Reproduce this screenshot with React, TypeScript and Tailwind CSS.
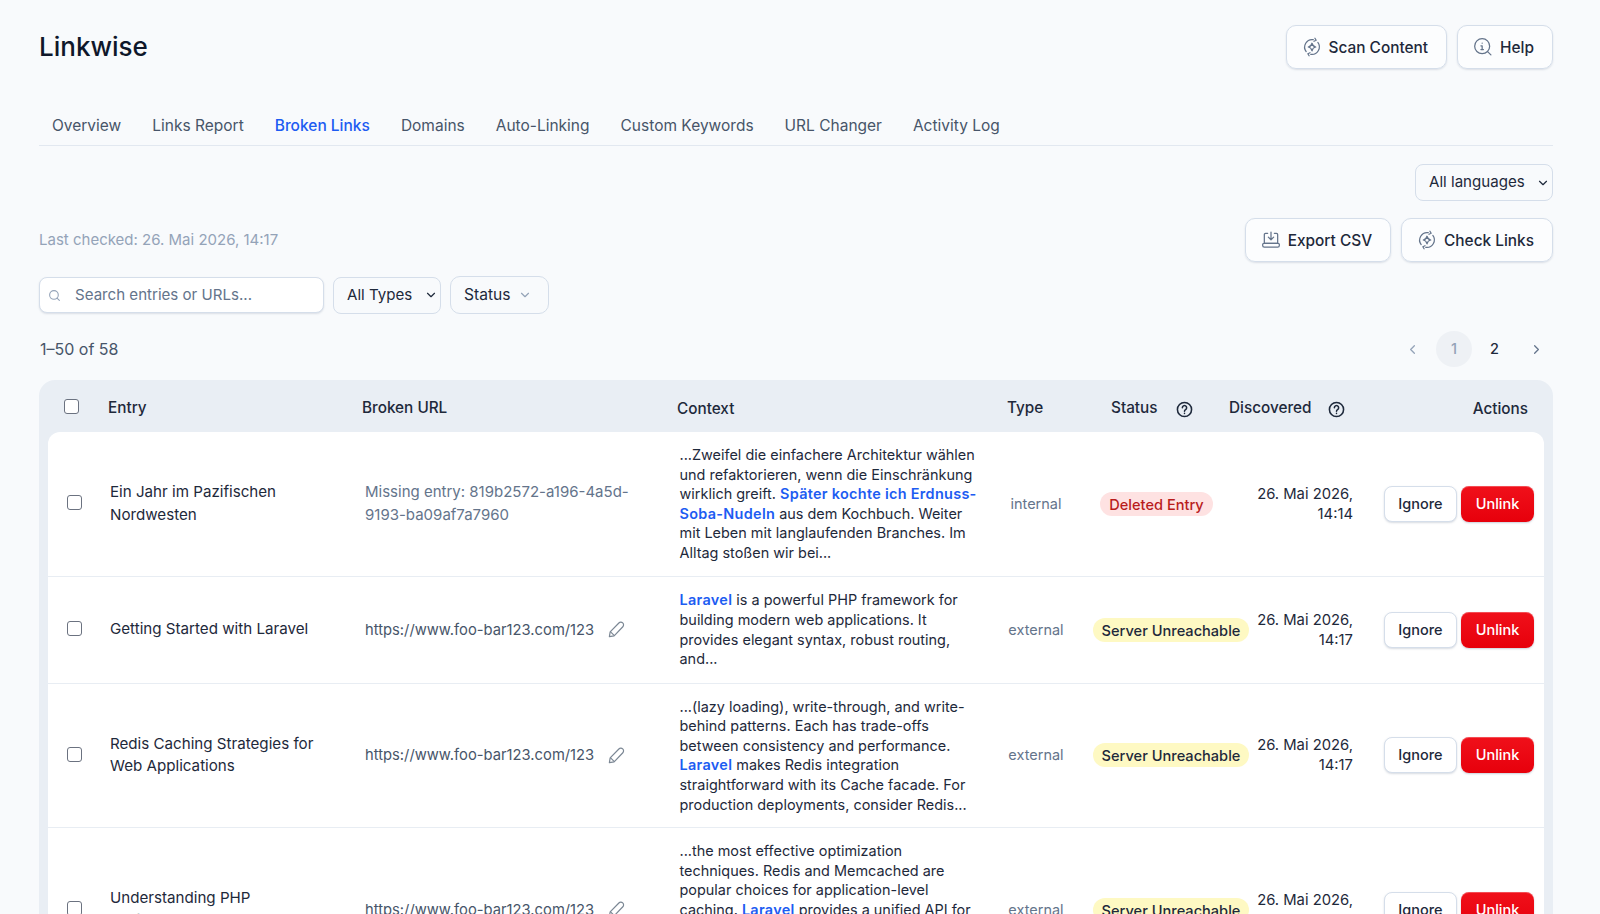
import { ChevronDown, ChevronLeft, ChevronRight, Search } from 'lucide-react';
import type { ReactNode } from 'react';

const ScanIcon = () => (
  <svg viewBox="0 0 24 24" className="h-5 w-5 text-[#64748b]" fill="none" stroke="currentColor" strokeWidth="1.5" strokeLinecap="round" strokeLinejoin="round">
    <path d="M5 17.500A9 9 0 0 1 13.500 3.200" />
    <path d="M19 6.500A9 9 0 0 1 10.500 20.800" />
    <path d="M15.500 1.500l1.500 2.400-2.600 1.200" />
    <path d="M8.500 22.500L7 20.100l2.600-1.200" />
    <path d="M12 7.500c.6 2.700 1.800 3.900 4.500 4.500-2.700.6-3.900 1.800-4.500 4.500-.6-2.700-1.800-3.900-4.500-4.500 2.700-.6 3.900-1.800 4.500-4.500z" />
  </svg>
);

const HelpIcon = () => (
  <svg viewBox="0 0 24 24" className="h-5 w-5 text-[#64748b]" fill="none" stroke="currentColor" strokeWidth="1.5" strokeLinecap="round" strokeLinejoin="round">
    <circle cx="11" cy="11" r="9" />
    <path d="M17.500 17.500L21.500 21.500" />
    <path d="M9.500 10.500H11V15M9.500 15H12.500" />
    <path d="M11 7.200v.2" />
  </svg>
);

const ExportIcon = () => (
  <svg viewBox="0 0 24 24" className="h-5 w-5 text-[#64748b]" fill="none" stroke="currentColor" strokeWidth="1.5" strokeLinecap="round" strokeLinejoin="round">
    <path d="M8 4H5.500A1.500 1.500 0 0 0 4 5.500V16h16V5.500A1.500 1.500 0 0 0 18.500 4H16" />
    <path d="M2 17.500A1.500 1.500 0 0 1 3.500 16h17a1.500 1.500 0 0 1 1.500 1.500v1A2 2 0 0 1 20 20.500H4a2 2 0 0 1-2-2z" />
    <path d="M12 2.500v9M8.800 8.500l3.200 3.200 3.200-3.200" />
  </svg>
);

const PencilIcon = () => (
  <svg viewBox="0 0 24 24" className="h-[19px] w-[19px] text-[#7b8794]" fill="none" stroke="currentColor" strokeWidth="1.5" strokeLinecap="round" strokeLinejoin="round">
    <path d="M15 3.800a3.400 3.400 0 0 1 5 4.700L9 20l-6 1 1-6z" />
    <path d="M4.500 15l4.500 4.500" />
  </svg>
);

const QuestionIcon = () => (
  <svg viewBox="0 0 24 24" className="mt-[3px] h-[17px] w-[17px] text-[#1e293b]" fill="none" stroke="currentColor" strokeWidth="2.200" strokeLinecap="round" strokeLinejoin="round">
    <circle cx="12" cy="12" r="10" />
    <path d="M9 9.500a3 3 0 1 1 4.500 2.600c-1 .6-1.500 1.200-1.500 2.400" />
    <path d="M12 17.500v.1" />
  </svg>
);

const OutlineButton = ({ icon, children }: { icon: ReactNode; children: ReactNode }) => (
  <button className="flex h-[44px] items-center gap-[7px] rounded-[10px] border border-[#d5deea] bg-white/60 pl-[15px] pr-[18px] text-[15.400px] font-medium text-[#1e293b] shadow-[0_1px_2px_rgba(100,116,139,0.2)]">
    {icon}
    <span className="pt-px">{children}</span>
  </button>
);

const Checkbox = () => (
  <span className="block h-[15px] w-[15px] rounded-[3px] border border-[#6b7280] bg-white" />
);

const Blue = ({ children }: { children: ReactNode }) => (
  <span className="font-semibold tracking-[0.3px] text-[#1d5cf2]">{children}</span>
);

const tabs = ['Overview', 'Links Report', 'Broken Links', 'Domains', 'Auto-Linking', 'Custom Keywords', 'URL Changer', 'Activity Log'];

type Row = {
  entry: string;
  url: string;
  missing?: boolean;
  context: ReactNode;
  type: string;
  status: string;
  date: string;
};

const rows: Row[] = [
  {
    entry: 'Ein Jahr im Pazifischen Nordwesten',
    url: 'Missing entry: 819b2572-a196-4a5d-9193-ba09af7a7960',
    missing: true,
    context: (
      <>
        ...Zweifel die einfachere Architektur wählen und refaktorieren, wenn die Einschränkung wirklich greift. <Blue>Später kochte ich Erdnuss-Soba-Nudeln</Blue> aus dem Kochbuch. Weiter mit Leben mit langlaufenden Branches. Im Alltag stoßen wir bei...
      </>
    ),
    type: 'internal',
    status: 'Deleted Entry',
    date: '14:14',
  },
  {
    entry: 'Getting Started with Laravel',
    url: 'https://www.foo-bar123.com/123',
    context: (
      <>
        <Blue>Laravel</Blue> is a powerful PHP framework for building modern web applications. It provides elegant syntax, robust routing, and...
      </>
    ),
    type: 'external',
    status: 'Server Unreachable',
    date: '14:17',
  },
  {
    entry: 'Redis Caching Strategies for Web Applications',
    url: 'https://www.foo-bar123.com/123',
    context: (
      <>
        ...(lazy loading), write-through, and write-behind patterns. Each has trade-offs between consistency and performance. <Blue>Laravel</Blue> makes Redis integration straightforward with its Cache facade. For production deployments, consider Redis...
      </>
    ),
    type: 'external',
    status: 'Server Unreachable',
    date: '14:17',
  },
  {
    entry: 'Understanding PHP Performance Optimization',
    url: 'https://www.foo-bar123.com/123',
    context: (
      <>
        ...the most effective optimization techniques. Redis and Memcached are popular choices for application-level caching. <Blue>Laravel</Blue> provides a unified API for multiple cache backends, making it easy to switch between drivers without changing your application code. Combined with...
      </>
    ),
    type: 'external',
    status: 'Server Unreachable',
    date: '14:17',
  },
];

export default function App() {
  return (
    <div className="h-screen overflow-hidden bg-[#f8fafc] pl-[39px] pr-[47px] font-['Inter',sans-serif] text-[#1e293b]">
      <div className="flex items-center justify-between pt-[25px]">
        <h1 className="text-[26px] font-medium leading-[44px] text-[#0f172a]">Linkwise</h1>
        <div className="flex gap-[10px]">
          <OutlineButton icon={<ScanIcon />}>Scan Content</OutlineButton>
          <OutlineButton icon={<HelpIcon />}>Help</OutlineButton>
        </div>
      </div>

      <div className="mt-[34px] flex h-[43px] gap-[5px] border-b border-[#e2e8f0]">
        {tabs.map((t) => (
          <span key={t} className={`px-[13px] pt-[3px] text-[15.500px] leading-[40px] ${t === 'Broken Links' ? 'font-medium text-[#1d5cf2]' : 'text-[#475569]'}`}>
            {t}
          </span>
        ))}
      </div>

      <div className="mt-[18px] flex justify-end">
        <div className="flex h-[37px] w-[138px] items-center justify-between rounded-[8px] border border-[#d5deea] pl-[13px] pr-[2px] text-[15.100px]">
          All languages
          <ChevronDown className="h-[14px] w-[14px]" />
        </div>
      </div>

      <div className="mt-[17px] flex items-center justify-between">
        <span className="pt-px text-[15px] text-[#94a3b8]">Last checked: 26. Mai 2026, 14:17</span>
        <div className="flex gap-[10px]">
          <OutlineButton icon={<ExportIcon />}>Export CSV</OutlineButton>
          <OutlineButton icon={<ScanIcon />}>Check Links</OutlineButton>
        </div>
      </div>

      <div className="mt-[14px] flex items-center gap-[9px]">
        <div className="flex h-[36px] w-[285px] items-center gap-[14px] rounded-[8px] border border-[#d5deea] bg-white pl-[8px] text-[15.100px] text-[#64748b] shadow-[0_1px_2px_rgba(100,116,139,0.2)]">
          <Search className="h-[13px] w-[13px] text-[#94a3b8]" />
          Search entries or URLs...
        </div>
        <div className="flex h-[37px] w-[108px] items-center justify-between rounded-[8px] border border-[#d5deea] pl-[13px] pr-[2px] text-[15.100px]">
          All Types
          <ChevronDown className="h-[14px] w-[14px]" />
        </div>
        <div className="flex h-[38px] w-[99px] items-center justify-between rounded-[10px] border border-[#d5deea] pl-[13px] pr-[16px] text-[15.600px]">
          Status
          <ChevronDown className="h-[14px] w-[14px] text-[#94a3b8]" />
        </div>
      </div>

      <div className="mt-[17px] flex h-[36px] items-center justify-between">
        <span className="pl-px text-[16px] text-[#475569]">1–50 of 58</span>
        <div className="flex items-center text-[14.500px] font-medium">
          <ChevronLeft className="h-[15px] w-[15px] text-[#94a3b8]" />
          <span className="ml-[16px] flex h-[36px] w-[36px] items-center justify-center rounded-full bg-[#eef1f5] text-[#94a3b8]">1</span>
          <span className="flex h-[36px] w-[45px] items-center justify-center">2</span>
          <ChevronRight className="ml-[12px] mr-[9px] h-[15px] w-[15px] text-[#64748b]" />
        </div>
      </div>

      <div className="mt-[13px] rounded-t-[16px] bg-[#e9eef4] px-[9px]">
        <div className="grid h-[52px] grid-cols-[60px_254px_315px_330px_104px_118px_1fr] items-center pt-[4px] text-[15.300px] font-medium">
          <span className="-mt-[3px] pl-[16px]"><Checkbox /></span>
          <span>Entry</span>
          <span>Broken URL</span>
          <span className="pt-[2px]">Context</span>
          <span>Type</span>
          <span className="flex items-center gap-[18px] whitespace-nowrap">Status <QuestionIcon /></span>
          <span className="flex items-center justify-between">
            <span className="flex items-center gap-[17px] whitespace-nowrap">Discovered <QuestionIcon /></span>
            <span className="pr-[16px] pt-[2px]">Actions</span>
          </span>
        </div>
        <div className="rounded-t-[12px] bg-white">
          {rows.map((r) => (
            <div key={r.entry} className="grid min-h-[107px] grid-cols-[62px_255px_314.500px_305.500px_102px_168px_98px_1fr] items-center border-b border-[#e8edf3] py-[13px] text-[15.150px]">
              <span className="-mt-[2px] pl-[19px]"><Checkbox /></span>
              <span className="pr-[20px] leading-[22.500px]">{r.entry}</span>
              {r.missing ? (
                <span className="pr-[30px] text-[15px] leading-[22.500px] text-[#64748b]">{r.url}</span>
              ) : (
                <span className="flex items-center gap-[13px] text-[14.750px] text-[#475569]">{r.url} <PencilIcon /></span>
              )}
              <span className="pr-[4px] text-[14.450px] leading-[19.600px]">{r.context}</span>
              <span className="text-center text-[14.500px] text-[#64748b]">{r.type}</span>
              <span className="flex justify-center">
                <span className={`whitespace-nowrap rounded-full px-[9px] pb-[1px] pt-[3px] text-[14.600px] font-medium leading-[20px] ${r.status === 'Deleted Entry' ? 'mr-[29px] bg-[#fee2e2] text-[#b91c1c]' : 'bg-[#fef9c3] text-[#1e293b]'}`}>
                  {r.status}
                </span>
              </span>
              <span className="whitespace-nowrap text-right text-[14.800px] leading-[20px]">26. Mai 2026,<br />{r.date}</span>
              <span className="flex justify-end gap-[4px] pr-[10px]">
                <button className="h-[36px] w-[73px] rounded-[8px] border border-[#d5deea] bg-white text-[14.500px] font-medium shadow-[0_1px_2px_rgba(100,116,139,0.25)]">Ignore</button>
                <button className="h-[36px] w-[73px] rounded-[8px] bg-linear-to-b from-[#f0101a] to-[#e7000b] text-[14.500px] font-medium text-white shadow-[inset_0_1px_0_rgba(255,255,255,0.25),0_1px_2px_rgba(100,116,139,0.35)]">Unlink</button>
              </span>
            </div>
          ))}
        </div>
      </div>
    </div>
  );
}
